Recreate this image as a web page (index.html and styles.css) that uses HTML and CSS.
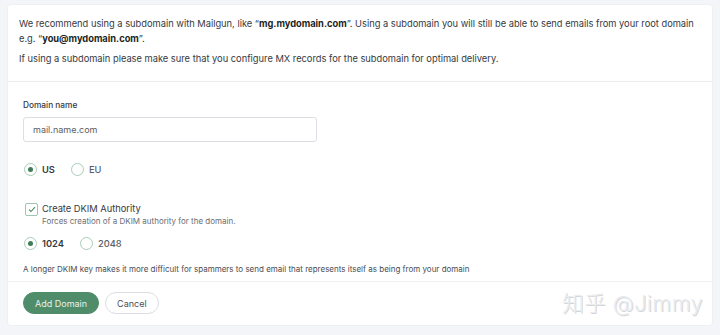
FILE: index.html
```html
<!DOCTYPE html>
<html lang="en">
<head>
  <meta charset="UTF-8" />
  <title>Add Domain</title>
  <link rel="stylesheet" href="styles.css">
</head>
<body>
  <div class="card">
    <div class="intro">
      <p>We recommend using a subdomain with Mailgun, like “<b>mg.mydomain.com</b>”. Using a subdomain you will still be able to send emails from your root domain e.g. “<b>you@mydomain.com</b>”.</p>
      <p>If using a subdomain please make sure that you configure MX records for the subdomain for optimal delivery.</p>
    </div>

    <div class="form">
      <label class="label" for="domain">Domain name</label>
      <input class="input" id="domain" type="text" placeholder="mail.name.com">

      <div class="radios region">
        <span class="radio checked"></span><span class="radio-text">US</span>
        <span class="radio"></span><span class="radio-text light">EU</span>
      </div>

      <div class="check-row">
        <span class="checkbox">
          <svg width="8" height="7" viewBox="0 0 8 7"><path d="M1 3.6 L3 5.5 L7 1.2" fill="none" stroke="#4d8a66" stroke-width="1.1"/></svg>
        </span>
        <span class="check-text">Create DKIM Authority</span>
      </div>
      <div class="hint">Forces creation of a DKIM authority for the domain.</div>

      <div class="radios keysize">
        <span class="radio checked"></span><span class="radio-text">1024</span>
        <span class="radio"></span><span class="radio-text light">2048</span>
      </div>

      <div class="note">A longer DKIM key makes it more difficult for spammers to send email that represents itself as being from your domain</div>
    </div>

    <div class="actions">
      <button class="btn primary">Add Domain</button>
      <button class="btn">Cancel</button>
      <span class="watermark">知乎 @Jimmy</span>
    </div>
  </div>
</body>
</html>
```

FILE: styles.css
```css
body {
  margin: 0;
  padding: 5px 8px 10px;
  background-color: #f4f5f8;
  font-family: Inter, "Noto Sans CJK SC", sans-serif;
  color: #36393e;
}

.card {
  background-color: #fff;
  border-radius: 3px;
  box-shadow: 0 0 0 1px #eef0f3;
}

.intro {
  padding: 11px 11px 15px;
  border-bottom: 1px solid #ececef;
  font-size: 9.3px;
  line-height: 15px;
}

.intro p {
  margin: 0 0 5px;
}

.intro p:last-child {
  margin-bottom: 0;
}

.intro b {
  font-weight: 700;
  color: #1c1f24;
}

.form {
  padding: 17px 15px 6px;
  border-bottom: 1px solid #f0f0f3;
}

.label {
  display: block;
  font-size: 8.3px;
  font-weight: 500;
  line-height: 12px;
  margin-bottom: 6px;
}

.input {
  display: block;
  box-sizing: border-box;
  width: 294px;
  height: 25px;
  padding: 0 9px;
  border: 1px solid #dcdee3;
  border-radius: 3px;
  font-family: Inter, sans-serif;
  font-size: 9px;
  color: #555;
}

.input::placeholder {
  color: #5a5d63;
}

.radios {
  display: flex;
  align-items: center;
}

.region {
  margin-top: 21px;
}

.radio {
  width: 11px;
  height: 11px;
  border: 1px solid #a9cdb7;
  border-radius: 50%;
  position: relative;
  margin-left: 1px;
}

.radio.checked::after {
  content: "";
  position: absolute;
  left: 3px;
  top: 3px;
  width: 5px;
  height: 5px;
  border-radius: 50%;
  background-color: #3f7d59;
}

.radio-text {
  font-size: 9.3px;
  font-weight: 600;
  margin: 0 15px 0 5px;
}

.radio-text.light {
  font-weight: 500;
  color: #5a5d63;
}

.check-row {
  display: flex;
  align-items: center;
  margin-top: 26px;
}

.checkbox {
  width: 11px;
  height: 11px;
  border: 1px solid #9ec5ad;
  border-radius: 2px;
  margin-left: 2px;
  display: flex;
  align-items: center;
  justify-content: center;
}

.check-text {
  font-size: 9.3px;
  margin-left: 4px;
  line-height: 14px;
}

.hint {
  font-size: 8px;
  color: #6b6e74;
  margin: 0 0 0 19px;
  line-height: 11px;
}

.keysize {
  margin-top: 10px;
}

.note {
  font-size: 8px;
  color: #4a4d53;
  margin-top: 14px;
  line-height: 11px;
}

.actions {
  display: flex;
  align-items: center;
  padding: 9px 15px 10px;
}

.btn {
  height: 22px;
  padding: 0 11px;
  border: 1px solid #dcdee3;
  border-radius: 11px;
  background-color: #fff;
  color: #4b4e54;
  font-family: Inter, sans-serif;
  font-size: 9px;
  margin-right: 6px;
}

.btn.primary {
  background-color: #4f8c69;
  border-color: #4f8c69;
  color: #e8f2ec;
}

.watermark {
  margin-left: auto;
  margin-right: -6px;
  font-size: 21.5px;
  line-height: 24px;
  font-weight: 300;
  color: #ebecee;
  text-shadow: 1px 1px 0 #d4d6d9;
  letter-spacing: 0.5px;
}
```
